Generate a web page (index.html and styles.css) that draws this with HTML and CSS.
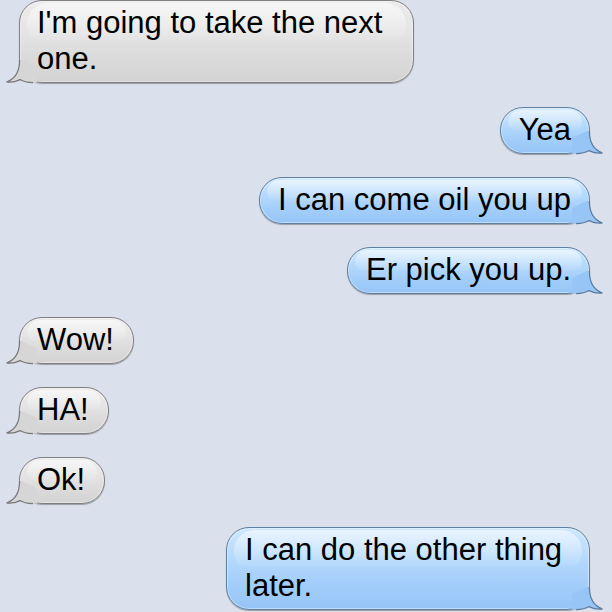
FILE: index.html
```html
<!DOCTYPE html>
<html lang="en">
<head>
    <meta charset="UTF-8">
    <meta name="viewport" content="width=device-width, initial-scale=1.0">
    <title>Messages</title>
    <link rel="stylesheet" href="styles.css">
</head>
<body>
    <div class="thread">
        <div class="msg in first">
            <span class="text">I'm going to take the next one.</span>
            <svg class="tail" viewBox="0 0 32 27" width="32" height="27">
                <path class="tail-fill" d="M14.6 3 C14.6 15 10 22 1.5 25 C6 25.6 11 24.6 15 22.6 C18 24.6 22 25.6 28 25.6 L32 25.6 L32 10 L17 3 Z"/>
                <path class="tail-line" d="M14.6 3 C14.6 15 10 22 1.5 25 C6 25.6 11 24.6 15 22.6 C18 24.6 22 25.6 28 25.6"/>
            </svg>
        </div>
        <div class="msg out">
            <span class="text">Yea</span>
            <svg class="tail" viewBox="0 0 32 27" width="32" height="27">
                <path class="tail-fill" d="M14.6 3 C14.6 15 10 22 1.5 25 C6 25.6 11 24.6 15 22.6 C18 24.6 22 25.6 28 25.6 L32 25.6 L32 10 L17 3 Z"/>
                <path class="tail-line" d="M14.6 3 C14.6 15 10 22 1.5 25 C6 25.6 11 24.6 15 22.6 C18 24.6 22 25.6 28 25.6"/>
            </svg>
        </div>
        <div class="msg out">
            <span class="text">I can come oil you up</span>
            <svg class="tail" viewBox="0 0 32 27" width="32" height="27">
                <path class="tail-fill" d="M14.6 3 C14.6 15 10 22 1.5 25 C6 25.6 11 24.6 15 22.6 C18 24.6 22 25.6 28 25.6 L32 25.6 L32 10 L17 3 Z"/>
                <path class="tail-line" d="M14.6 3 C14.6 15 10 22 1.5 25 C6 25.6 11 24.6 15 22.6 C18 24.6 22 25.6 28 25.6"/>
            </svg>
        </div>
        <div class="msg out">
            <span class="text">Er pick you up.</span>
            <svg class="tail" viewBox="0 0 32 27" width="32" height="27">
                <path class="tail-fill" d="M14.6 3 C14.6 15 10 22 1.5 25 C6 25.6 11 24.6 15 22.6 C18 24.6 22 25.6 28 25.6 L32 25.6 L32 10 L17 3 Z"/>
                <path class="tail-line" d="M14.6 3 C14.6 15 10 22 1.5 25 C6 25.6 11 24.6 15 22.6 C18 24.6 22 25.6 28 25.6"/>
            </svg>
        </div>
        <div class="msg in">
            <span class="text">Wow!</span>
            <svg class="tail" viewBox="0 0 32 27" width="32" height="27">
                <path class="tail-fill" d="M14.6 3 C14.6 15 10 22 1.5 25 C6 25.6 11 24.6 15 22.6 C18 24.6 22 25.6 28 25.6 L32 25.6 L32 10 L17 3 Z"/>
                <path class="tail-line" d="M14.6 3 C14.6 15 10 22 1.5 25 C6 25.6 11 24.6 15 22.6 C18 24.6 22 25.6 28 25.6"/>
            </svg>
        </div>
        <div class="msg in">
            <span class="text">HA!</span>
            <svg class="tail" viewBox="0 0 32 27" width="32" height="27">
                <path class="tail-fill" d="M14.6 3 C14.6 15 10 22 1.5 25 C6 25.6 11 24.6 15 22.6 C18 24.6 22 25.6 28 25.6 L32 25.6 L32 10 L17 3 Z"/>
                <path class="tail-line" d="M14.6 3 C14.6 15 10 22 1.5 25 C6 25.6 11 24.6 15 22.6 C18 24.6 22 25.6 28 25.6"/>
            </svg>
        </div>
        <div class="msg in">
            <span class="text">Ok!</span>
            <svg class="tail" viewBox="0 0 32 27" width="32" height="27">
                <path class="tail-fill" d="M14.6 3 C14.6 15 10 22 1.5 25 C6 25.6 11 24.6 15 22.6 C18 24.6 22 25.6 28 25.6 L32 25.6 L32 10 L17 3 Z"/>
                <path class="tail-line" d="M14.6 3 C14.6 15 10 22 1.5 25 C6 25.6 11 24.6 15 22.6 C18 24.6 22 25.6 28 25.6"/>
            </svg>
        </div>
        <div class="msg out">
            <span class="text">I can do the other thing later.</span>
            <svg class="tail" viewBox="0 0 32 27" width="32" height="27">
                <path class="tail-fill" d="M14.6 3 C14.6 15 10 22 1.5 25 C6 25.6 11 24.6 15 22.6 C18 24.6 22 25.6 28 25.6 L32 25.6 L32 10 L17 3 Z"/>
                <path class="tail-line" d="M14.6 3 C14.6 15 10 22 1.5 25 C6 25.6 11 24.6 15 22.6 C18 24.6 22 25.6 28 25.6"/>
            </svg>
        </div>
    </div>
</body>
</html>
```

FILE: styles.css
```css
body {
    margin: 0;
    height: 612px;
    overflow: hidden;
    font-family: "Liberation Sans", Arial, sans-serif;
    background-color: #dbe1ec;
}
.thread {
    display: flex;
    flex-direction: column;
    gap: 23px;
    padding: 0 22px 0 19px;
}
.msg {
    position: relative;
    box-sizing: border-box;
    padding: 4px 18px 5px;
    border: 1px solid #7f7f7f;
    border-radius: 23px;
    font-size: 31px;
    line-height: 36px;
    color: #000;
    box-shadow: 0 1px 1px rgba(0, 0, 0, 0.3), inset 0 0 0 1px rgba(255, 255, 255, 0.4);
}
.msg.first {
    margin-bottom: 1px;
}
/* soft gloss on the top half */
.msg::before {
    content: "";
    position: absolute;
    top: 2px;
    left: 7px;
    right: 7px;
    height: 46%;
    border-radius: 21px 21px 14px 14px;
    background: linear-gradient(rgba(255, 255, 255, 0.55), rgba(255, 255, 255, 0.05));
}
.msg .text {
    position: relative;
    z-index: 1;
}
.msg .tail {
    position: absolute;
    bottom: -2px;
    overflow: visible;
}
.tail-line {
    fill: none;
    stroke-width: 1.2;
}
.msg.in {
    align-self: flex-start;
    max-width: 395px;
    padding-left: 17px;
    padding-right: 19px;
    background: linear-gradient(#ececec 0%, #e4e4e4 40%, #dcdcdc 65%, #d3d3d3 100%);
}
.msg.in .tail {
    left: -15px;
}
.msg.in .tail-fill {
    fill: #d6d6d6;
}
.msg.in .tail-line {
    stroke: #777;
}
.msg.out {
    align-self: flex-end;
    max-width: 364px;
    border-color: #5f7f9f;
    background: linear-gradient(#cfe8fd 0%, #b3d8fc 40%, #a5cffa 65%, #95c5f6 100%);
}
.msg.out .tail {
    right: -15px;
    transform: scaleX(-1);
}
.msg.out .tail-fill {
    fill: #97c6f6;
}
.msg.out .tail-line {
    stroke: #5b7b9c;
}
```
